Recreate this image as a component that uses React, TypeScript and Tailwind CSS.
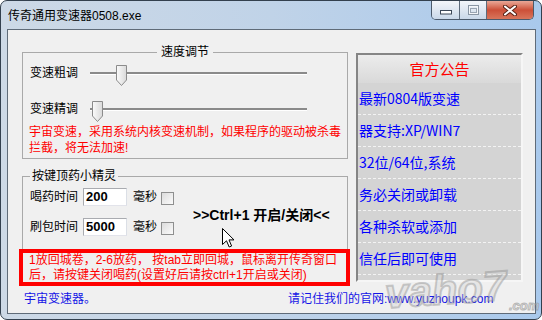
import React from 'react'

const notices = [
  '最新0804版变速',
  '器支持:XP/WIN7',
  '32位/64位,系统',
  '务必关闭或卸载',
  '各种杀软或添加',
  '信任后即可使用',
]

function TitleBar() {
  return (
    <div className="flex h-[28px]">
      <span className="ml-[7px] pt-[8px] text-[12px] leading-[14px]">传奇通用变速器0508.exe</span>
      <div className="ml-auto mr-[7px] flex h-[19px] overflow-hidden rounded-b-[5px] border border-t-0 border-[#4b5a6b]">
        <div className="flex w-[28px] items-end justify-center border-r border-[#5d6b7b] bg-gradient-to-b from-[#f3f6fa] via-[#dfe7f1] to-[#c9d8e9] pb-[4px]">
          <svg width="12" height="5" viewBox="0 0 12 5">
            <rect x="0.5" y="0.5" width="11" height="3.5" fill="#fff" stroke="#3c4858" />
          </svg>
        </div>
        <div className="flex w-[27px] items-center justify-center border-r border-[#5d6b7b] bg-gradient-to-b from-[#f3f6fa] via-[#dfe7f1] to-[#c9d8e9]">
          <svg width="11" height="10" viewBox="0 0 11 10">
            <rect x="0.5" y="0.5" width="10" height="9" fill="none" stroke="#8a96a4" />
            <rect x="1.5" y="1.5" width="8" height="7" fill="none" stroke="#f4f6f9" />
            <rect x="2.5" y="3.5" width="6" height="4" fill="none" stroke="#9aa5b2" />
          </svg>
        </div>
        <div className="flex w-[46px] items-center justify-center bg-gradient-to-b from-[#e9a797] via-[#cc4f38] to-[#d8755b]">
          <svg width="14" height="11" viewBox="0 0 14 11">
            <path d="M2 1.5 L12 9.5 M12 1.5 L2 9.5" stroke="#5a2418" strokeWidth="4" strokeLinecap="round" />
            <path d="M2 1.5 L12 9.5 M12 1.5 L2 9.5" stroke="#fff" strokeWidth="2" strokeLinecap="round" />
          </svg>
        </div>
      </div>
    </div>
  )
}

function Slider({ label, thumb }: { label: string; thumb: string }) {
  return (
    <div className="flex h-[22px] items-center pl-[7px]">
      <span className="w-[60px] leading-[14px]">{label}</span>
      <div className="relative h-[22px] w-[217px]">
        <div className="absolute left-0 right-0 top-[10px] h-[3px] border-t-2 border-b border-t-[#8a8a8a] border-b-white" />
        <svg className={`absolute top-[3px] ${thumb}`} width="11" height="21" viewBox="0 0 11 21">
          <defs>
            <linearGradient id="th" x1="0" y1="0" x2="1" y2="0">
              <stop offset="0" stopColor="#fbfbfb" />
              <stop offset="1" stopColor="#d9d9d9" />
            </linearGradient>
          </defs>
          <path d="M0.5 0.5 H10.5 V15 L5.5 20.5 L0.5 15 Z" fill="url(#th)" stroke="#8b8b8b" />
        </svg>
      </div>
    </div>
  )
}

function TimeRow({ label, value }: { label: string; value: string }) {
  return (
    <div className="flex h-[18px] items-center pl-[7px]">
      <span className="w-[48px] leading-[14px]">{label}</span>
      <div className="ml-[5px] h-[18px] w-[44px] border border-[#a9abb0] border-b-[#e2e3ea] border-r-[#dbdfe6] bg-white pl-[2px] text-[13px] font-bold leading-[16px]">
        {value}
      </div>
      <span className="ml-[6px] w-[24px] leading-[14px]">毫秒</span>
      <span className="ml-[4px] mt-[3px] h-[13px] w-[13px] border border-[#8e8f8f] bg-gradient-to-br from-[#dcdcdc] to-[#fbfbfb]" />
    </div>
  )
}

function LeftColumn() {
  return (
    <div className="ml-[11px] flex w-[331px] flex-col">
      <fieldset className="ml-[3px] mr-[2px] border border-[#a9a9a9] pb-[2px]">
        <legend className="mx-auto px-[4px] leading-[14px]">速度调节</legend>
        <div className="mt-[3px]">
          <Slider label="变速粗调" thumb="left-[26px]" />
        </div>
        <div className="mt-[14px]">
          <Slider label="变速精调" thumb="left-[2px]" />
        </div>
        <p className="mt-[4px] pl-[6px] leading-[16px] text-[#ff0000]">
          宇宙变速，采用系统内核变速机制，如果程序的驱动被杀毒
          <br />
          拦截，将无法加速!
        </p>
      </fieldset>

      <fieldset className="ml-[3px] mr-[2px] mt-[10px] border border-b-0 border-[#a9a9a9] pb-[13px]">
        <legend className="ml-[7px] px-[2px] leading-[14px]">按键顶药小精灵</legend>
        <div className="flex">
          <div className="flex flex-col gap-[12px] pt-[5px]">
            <TimeRow label="喝药时间" value="200" />
            <TimeRow label="刷包时间" value="5000" />
          </div>
          <div className="ml-[19px] mt-[24px] whitespace-nowrap text-[14px] font-bold leading-[16px]">
            &gt;&gt;Ctrl+1 开启/关闭&lt;&lt;
          </div>
        </div>
      </fieldset>

      <div className="h-[37px] border-4 border-[#ff0000] pl-[6px] leading-[15px] text-[#f00]">
        <p className="whitespace-nowrap">1放回城卷，2-6放药， 按tab立即回城，鼠标离开传奇窗口</p>
        <p className="whitespace-nowrap">后，请按键关闭喝药(设置好后请按ctrl+1开启或关闭)</p>
      </div>
    </div>
  )
}

function NoticePanel() {
  return (
    <div className="ml-[6px] mt-[8px] h-[229px] w-[167px] border-2 border-[#858585] border-b-[#f6f6f6] border-r-[#f6f6f6] bg-[#d4d4d4] font-['Noto_Sans_CJK_SC',sans-serif]">
      <div className="h-[28px] bg-gradient-to-b from-[#ececec] to-[#d9d9d9] text-center text-[15px] leading-[28px] text-[#ff0000]">
        官方公告
      </div>
      {notices.map((n) => (
        <div key={n} className="h-[32px] border-b border-dashed border-[#f3f3f3] pl-[1px] text-[14px] leading-[31px] text-[#0000ff]">
          {n}
        </div>
      ))}
    </div>
  )
}

export default function App() {
  return (
    <div className="relative h-[320px] w-[542px] overflow-hidden rounded-[7px] border border-[#33404e] bg-gradient-to-r from-[#cdd9e6] via-[#c0d3e8] to-[#a9c9ec] font-['Liberation_Sans','Noto_Sans_CJK_SC',sans-serif] text-[12px] text-black">
      <TitleBar />
      <div className="ml-[6px] mr-[5px] flex h-[285px] flex-col border border-[#5f6b78] bg-[#f0f0f0]">
        <div className="flex pt-[15px]">
          <LeftColumn />
          <NoticePanel />
        </div>
        <div className="mt-[6px] flex h-[14px] leading-[14px] text-[#1414e6]">
          <span className="ml-[16px] w-[264px]">宇宙变速器。</span>
          <span>请记住我们的官网:www.yuzhoupk.com</span>
        </div>
      </div>

      {/* mouse pointer */}
      <svg className="absolute left-[221px] top-[227px]" width="13" height="21" viewBox="0 0 13 21">
        <path d="M0.5 0.5 V16.5 L4.5 12.8 L7.2 19 L9.6 18 L7 11.9 H12 Z" fill="#fff" stroke="#000" />
      </svg>

      {/* watermark */}
      <div className="pointer-events-none absolute left-[384px] top-[268px] -rotate-[4deg] font-['Liberation_Sans',sans-serif] text-[42px] font-black italic leading-[42px] text-[#d4d4d4]/40 [-webkit-text-stroke:2px_rgba(120,120,120,0.35)]">
        vaho7
      </div>
      <div className="pointer-events-none absolute left-[508px] top-[298px] font-['Liberation_Sans',sans-serif] text-[13px] font-black italic leading-[14px] text-[#d8d8d8]/50 [-webkit-text-stroke:1px_rgba(120,120,120,0.45)]">
        .com
      </div>
    </div>
  )
}
